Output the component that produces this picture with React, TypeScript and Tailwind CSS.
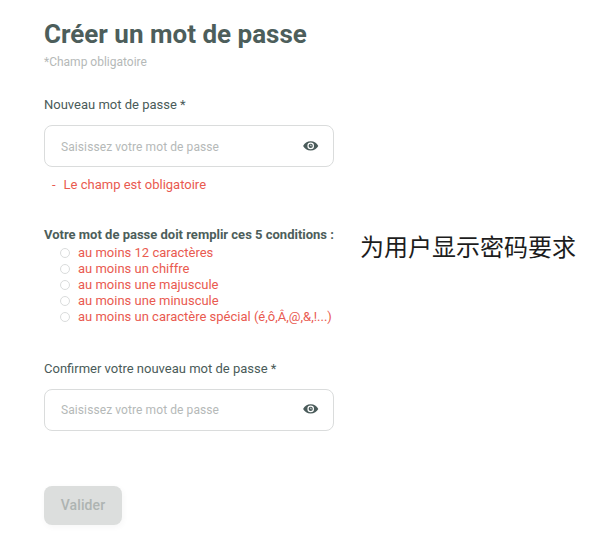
import React from 'react';

function Eye() {
  return (
    <svg className="mb-0.5 h-4 w-4 shrink-0" viewBox="0 0 16 16" fill="#4a5b5a">
      <path
        fillRule="evenodd"
        d="M7.700 3.300C4.300 3.300 1.500 5.300.1 7.900c1.400 2.600 4.200 4.600 7.600 4.600s6.200-2 7.600-4.600C13.900 5.300 11.100 3.300 7.700 3.300Zm0 7.900a3.300 3.300 0 1 1 0-6.600 3.300 3.300 0 0 1 0 6.600Z"
      />
      <circle cx="7.700" cy="7.900" r="2.100" />
      <path d="M7.700 6.700v1.200h1" fill="none" stroke="#fff" strokeWidth=".7" />
    </svg>
  );
}

function Field({ label, inner = '' }: { label: string; inner?: string }) {
  return (
    <div>
      <label className="block h-5 text-[13px] leading-5 text-[#4a5b59]">{label}</label>
      <div
        className={`mt-[10px] flex h-[42px] items-center justify-between rounded-lg border border-[#dadcdc] pr-[14px] pl-4 ${inner}`}
      >
        <input
          className="w-[220px] text-xs tracking-[0.09px] text-[#4a5b59] outline-none placeholder:text-[#b5b9b8]"
          placeholder="Saisissez votre mot de passe"
        />
        <Eye />
      </div>
    </div>
  );
}

const rules = [
  'au moins 12 caractères',
  'au moins un chiffre',
  'au moins une majuscule',
  'au moins une minuscule',
  'au moins un caractère spécial (é,ô,Â,@,&,!...)',
];

export default function App() {
  return (
    <div className="flex h-[551px] w-[599px] overflow-hidden bg-white font-[Roboto,sans-serif]">
      <main className="ml-11 w-[290px] shrink-0 pt-[18px]">
        <h1 className="h-8 text-[26px] leading-8 font-bold whitespace-nowrap text-[#4d5e5b]">Créer un mot de passe</h1>
        <p className="mt-[3px] h-[18px] text-xs leading-[18px] text-[#b5b9b8]">*Champ obligatoire</p>
        <div className="mt-6">
          <Field label="Nouveau mot de passe *" inner="pt-0.5" />
        </div>
        <p className="mt-2 ml-2 flex h-5 gap-2 text-[13px] leading-5 text-[#e95a50]">
          <span>-</span>
          <span>Le champ est obligatoire</span>
        </p>
        <h2 className="mt-[31px] h-[18px] text-[13px] leading-[18px] font-bold whitespace-nowrap text-[#4d5e5b]">
          Votre mot de passe doit remplir ces 5 conditions :
        </h2>
        <ul className="mt-px ml-4">
          {rules.map((r) => (
            <li key={r} className="flex h-4 items-center gap-2 text-[13px] leading-4 whitespace-nowrap text-[#e95a50]">
              <span className="h-[10px] w-[10px] rounded-full border border-[#dadcdc]" />
              {r}
            </li>
          ))}
        </ul>
        <div className="mt-[34px]">
          <Field label="Confirmer votre nouveau mot de passe *" />
        </div>
        <button className="mt-[55px] h-[39px] w-[78px] rounded-lg bg-[#dcdedd] pb-0.5 text-sm font-medium tracking-[0.1px] text-[#aeb4b2] shadow-[1px_2px_6px_rgba(0,0,0,0.04)]">
          Valider
        </button>
      </main>
      <p className="mt-[228px] ml-[26px] h-9 text-[24px] leading-9 whitespace-nowrap text-[#1d1d1d] font-['Noto_Sans_CJK_SC',sans-serif]">为用户显示密码要求</p>
    </div>
  );
}
